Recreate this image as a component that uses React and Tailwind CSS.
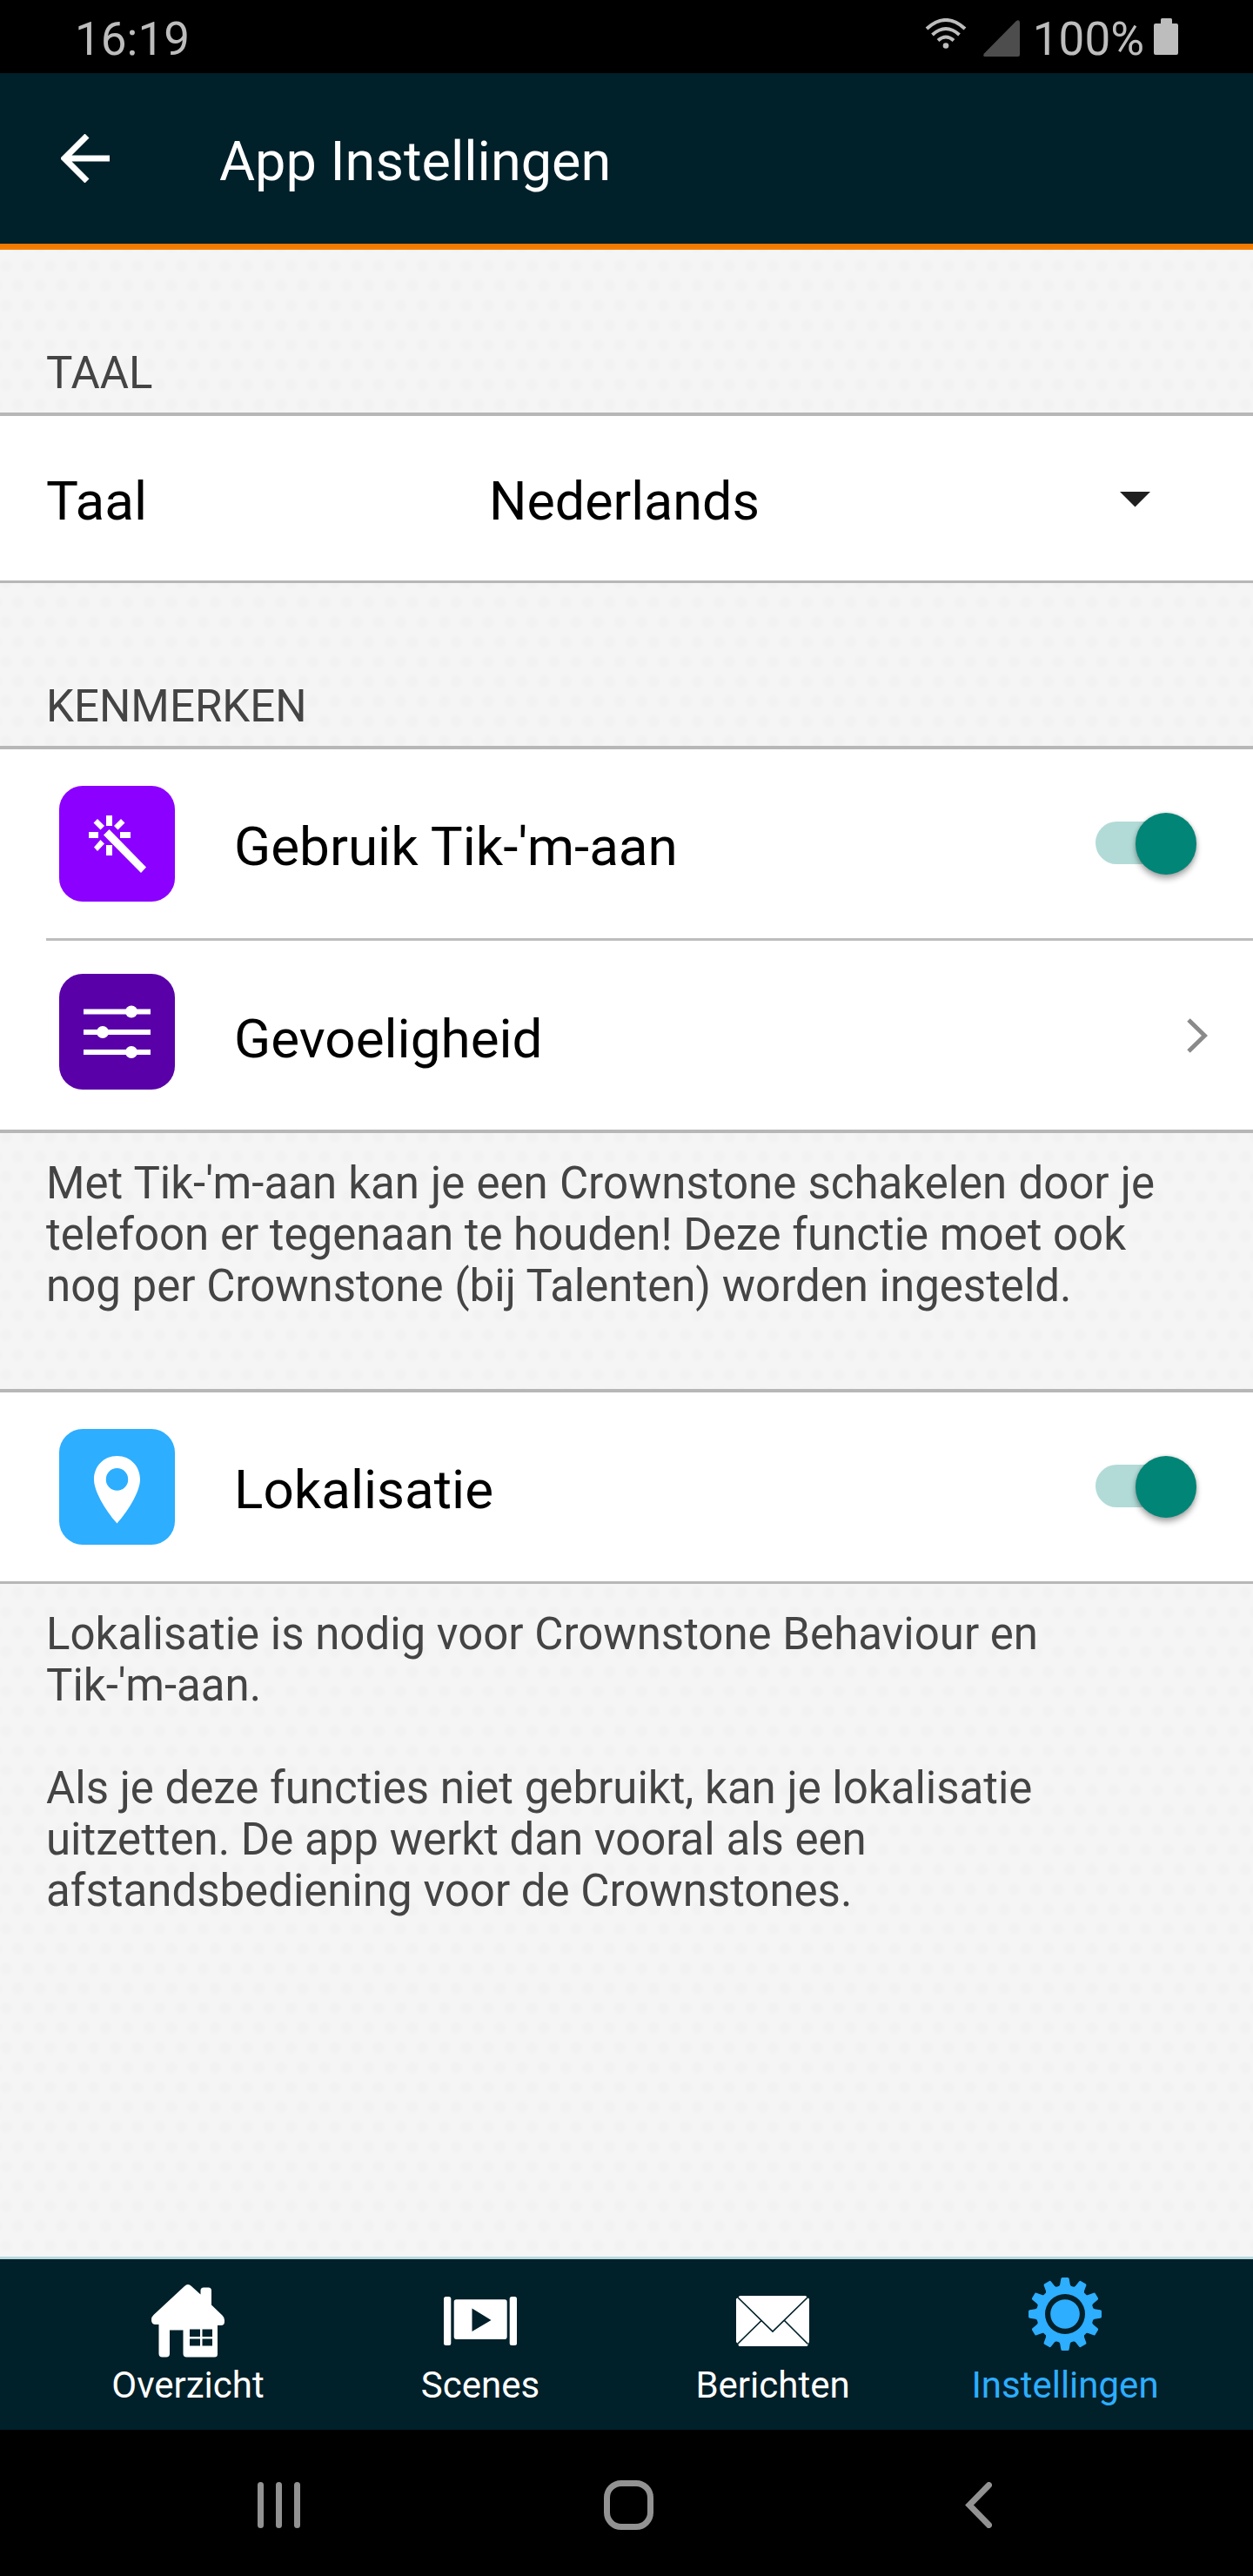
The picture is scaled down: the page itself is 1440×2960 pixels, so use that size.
const Rule = ({ className }) => <div className={`bg-[#b7b7b7] shrink-0 ${className}`} />;

const Tile = ({ className, children }) => (
  <div className={`w-[133px] h-[133px] rounded-[27px] shrink-0 ${className}`}>
    <svg viewBox="0 0 133 133" className="w-full h-full">{children}</svg>
  </div>
);

const Switch = () => (
  <div className="relative ml-auto mr-[65px] w-[116px] h-[71px] -mt-px flex items-center">
    <div className="w-[100px] h-[49px] rounded-full bg-[#b2dbd7] -mt-[2px]" />
    <div className="absolute right-0 top-0 w-[70px] h-[71px] rounded-full bg-[#008577] shadow-[0_5px_7px_rgba(0,0,0,0.32),0_0_4px_rgba(0,0,0,0.16)]" />
  </div>
);

const Row = ({ icon, label, labelClass = "mt-[6px]", children }) => (
  <div className="h-[217px] shrink-0 bg-white flex items-center pl-[68px]">
    {icon}
    <div className={`ml-[68px] text-[62px] leading-[74px] text-black whitespace-nowrap ${labelClass}`}>{label}</div>
    {children}
  </div>
);

const SectionTitle = ({ children }) => (
  <div className="h-[187px] shrink-0 flex items-end px-[53px] pb-[16px] text-[51px] leading-[59px] text-[#444]">{children}</div>
);

const WandIcon = () => (
  <Tile className="bg-[#8b00ff]">
    <g fill="#fff">
      <rect x="54" y="34" width="7" height="12" />
      <rect x="54" y="68" width="7" height="12" />
      <rect x="34" y="53" width="11" height="7" />
      <rect x="70" y="53" width="12" height="7" />
      <path d="M44 38l8 8-4.500 4.500-8-8zM71 38l4.500 4.500-8 8-4.500-4.500zM47.500 62l4.500 4.500-8 8.500-4-4.500z" />
      <path d="M57.500 50L100 93.500 94 100 51 56.500z" />
    </g>
  </Tile>
);

const SlidersIcon = () => (
  <Tile className="bg-[#5900a8]">
    <g fill="#fff">
      <rect x="28" y="40.500" width="77" height="6" />
      <rect x="28" y="64" width="77" height="6" />
      <rect x="28" y="87" width="77" height="6" />
      <circle cx="83" cy="43.500" r="7" />
      <circle cx="50" cy="67" r="7" />
      <circle cx="83" cy="90" r="7" />
    </g>
  </Tile>
);

const PinIcon = () => (
  <Tile className="bg-[#2daeff]">
    <path fill="#fff" fillRule="evenodd" d="M66.500 31C51 31 40 43 40 58c0 13 12 34 26.500 50.500C81 92 93 71 93 58 93 43 82 31 66.500 31zM66.500 45a12.700 12.900 0 1 1 0 25.800 12.700 12.900 0 1 1 0-25.800z" />
  </Tile>
);

const HomeIcon = () => (
  <svg viewBox="0 0 84 84" className="w-[84px] h-[84px]">
    <path fill="#fff" fillRule="evenodd" d="M38 2Q42 -2 46 2L56.500 11.500V7Q56.500 3.500 60 3.500H65.500Q69 3.500 69 7V23.500L81.500 35.500Q84 38 84 41V43Q84 47 80 47H76V80Q76 83.500 72.500 83.500H40.500Q36.500 83.500 36.500 79.500V52.500H21V79.500Q21 83.500 17 83.500H12.500Q8.500 83.500 8.500 79.500V46H5Q0 46 0 41Q0 37 2.500 35zM44 51.500V60H56V51.500zM58.500 51.500V60H70V51.500zM44 62.500V70.500H56V62.500zM58.500 62.500V70.500H70V62.500z" />
  </svg>
);

const ScenesIcon = () => (
  <svg viewBox="0 0 84 56" className="w-[84px] h-[56px]">
    <g fill="#fff">
      <rect width="8.300" height="56" rx="2.500" />
      <rect x="75.700" width="8.300" height="56" rx="2.500" />
      <path fillRule="evenodd" d="M14.500 3.300H70Q72.700 3.300 72.700 6V46Q72.700 49 70 49H14.500Q11.700 49 11.700 46V6Q11.700 3.300 14.500 3.300zM32.500 13.500V40L54.500 27z" />
    </g>
  </svg>
);

const MailIcon = () => (
  <svg viewBox="0 0 84 58" className="w-[84px] h-[58px] -mt-px">
    <path fill="#fff" d="M4.500 0H79.500Q81 0 81 1.500L84 3.500V53L82.500 56Q82.500 58 81 58H4Q2.500 58 2.500 56L0 53V3.500L3 1.500Q3 0 4.500 0z" />
    <path d="M2 2L42 41 82 2M1.500 55.500L28.500 29M82.500 55.500L55.500 28.500" fill="none" stroke="#00202a" strokeWidth="1.700" />
  </svg>
);

const GearIcon = () => (
  <svg viewBox="-42 -42 84 84" className="w-[84px] h-[84px]">
    <g fill="#2daeff">
      {[0, 30, 60, 90, 120, 150, 180, 210, 240, 270, 300, 330].map((a) => (
        <path key={a} transform={`rotate(${a})`} d="M-9 -30Q-6.200 -32 -5.800 -34L-4.700 -40.500Q-4.500 -42 -3 -42H3Q4.500 -42 4.700 -40.500L5.800 -34Q6.200 -32 9 -30z" />
      ))}
      <path fillRule="evenodd" d="M0 -33A33 33 0 1 1 0 33A33 33 0 1 1 0 -33zM0 -23A23 23 0 1 0 0 23A23 23 0 1 0 0 -23z" />
      <circle r="16.800" />
    </g>
  </svg>
);

const Tab = ({ icon, label, className = "", iconClass = "mt-[3px] mb-[7px]" }) => (
  <div className="w-[336px] flex flex-col items-center">
    <div className={`h-[84px] flex items-center ${iconClass}`}>{icon}</div>
    <div className={`text-[42px] leading-[50px] ${className}`}>{label}</div>
  </div>
);

export default function App() {
  return (
    <div className="w-[1440px] h-[2960px] flex flex-col overflow-hidden bg-[#f5f5f5] [background-image:radial-gradient(circle_at_center,rgba(0,0,0,0.012)_4px,transparent_9px),radial-gradient(circle_at_center,rgba(0,0,0,0.012)_4px,transparent_9px)] [background-size:25.2px_45.5px] [background-position:-5.6px_9.7px,8px_32.5px] font-['Roboto',sans-serif]">
      <div className="h-[84px] shrink-0 bg-black text-[#bdbdbd] text-[53px] leading-[62px] flex items-center pl-[86px] pr-[86px]">
        <div className="mt-[5px]">16:19</div>
        <svg viewBox="0 0 48 36" className="ml-auto w-[48px] h-[36px] -mt-[6px]">
          <g fill="none" stroke="#bdbdbd" strokeWidth="4">
            <path d="M2 12Q24 -8 46 12" />
            <path d="M8.500 19Q24 5 39.500 19" />
            <path d="M15 25.500Q24 17.500 33 25.500" />
          </g>
          <circle cx="24" cy="31.500" r="3.300" fill="#bdbdbd" />
        </svg>
        <svg viewBox="0 0 42 42" className="ml-[19px] w-[42px] h-[42px] mt-[4px]">
          <path d="M38 1Q42 -1 42 3V40Q42 42 40 42H2Q-1 42 1 38.500z" fill="#4d4d4d" />
        </svg>
        <div className="ml-[15px] mt-[5px]">100%</div>
        <svg viewBox="0 0 28 42" className="ml-[11px] w-[28px] h-[42px]">
          <path d="M8 1.500Q8 0 9.500 0H19.500Q21 0 21 1.500V6H26Q28 6 28 8V40Q28 42 26 42H2Q0 42 0 40V8Q0 6 2 6H8z" fill="#bdbdbd" />
        </svg>
      </div>

      <div className="h-[196px] shrink-0 bg-[#00202a] flex items-center pl-[70px]">
        <svg viewBox="0 0 56 56" className="w-[56px] h-[56px]">
          <path d="M30 2L4 28 30 54M4 28H56" fill="none" stroke="#fff" strokeWidth="7" />
        </svg>
        <div className="ml-[126px] mt-[7px] text-[63px] leading-[74px] text-white">App Instellingen</div>
      </div>
      <div className="h-[7px] shrink-0 bg-linear-to-b from-[#ea7800] to-[#f88100]" />

      <SectionTitle>TAAL</SectionTitle>
      <Rule className="h-[4px]" />
      <div className="h-[189px] shrink-0 bg-white flex items-center pl-[53px] pr-[118px] text-[62px] leading-[74px] text-black">
        <div className="w-[507px] mt-[6px]">Taal</div>
        <div className="mt-[6px] ml-[2px] text-[61px]">Nederlands</div>
        <svg viewBox="0 0 35 18" className="ml-auto mt-[2px] w-[35px] h-[18px]">
          <path d="M0 0H35L17.500 17.500z" fill="#1f1f1f" />
        </svg>
      </div>
      <Rule className="h-[3px]" />

      <SectionTitle>KENMERKEN</SectionTitle>
      <Rule className="h-[4px]" />
      <Row icon={<WandIcon />} label="Gebruik Tik-'m-aan"><Switch /></Row>
      <div className="bg-white pl-[53px]"><div className="h-[3px] bg-[#bdbdbd]" /></div>
      <Row icon={<div className="-mt-[8px]"><SlidersIcon /></div>} label="Gevoeligheid" labelClass="mt-[8px]">
        <svg viewBox="0 0 24 40" className="ml-auto mr-[52px] w-[24px] h-[40px]">
          <path d="M2 2L20.500 20 2 38" fill="none" stroke="#8a8a8a" strokeWidth="5" />
        </svg>
      </Row>
      <Rule className="h-[4px]" />

      <div className="h-[294px] shrink-0 pt-[28px] pl-[53px] text-[51px] leading-[59px] text-[#444] whitespace-nowrap">
        <span className="[word-spacing:0.5px]">Met Tik-'m-aan kan je een Crownstone schakelen door je</span><br />
        telefoon er tegenaan te houden! Deze functie moet ook<br />
        nog per Crownstone (bij Talenten) worden ingesteld.
      </div>
      <Rule className="h-[4px]" />
      <Row icon={<PinIcon />} label="Lokalisatie"><Switch /></Row>
      <Rule className="h-[3px]" />

      <div className="h-[773px] shrink-0 pt-[28px] pl-[53px] text-[51px] leading-[59px] text-[#444] whitespace-nowrap">
        Lokalisatie is nodig voor Crownstone Behaviour en<br />
        Tik-'m-aan.<br />
        <br />
        Als je deze functies niet gebruikt, kan je lokalisatie<br />
        uitzetten. De app werkt dan vooral als een<br />
        afstandsbediening voor de Crownstones.
      </div>

      <div className="h-[3px] shrink-0 bg-[#b8dadf]" />
      <div className="h-[196px] shrink-0 bg-[#00202a] flex justify-center pt-[26px] text-white">
        <Tab icon={<HomeIcon />} label="Overzicht" />
        <Tab icon={<ScenesIcon />} label="Scenes" />
        <Tab icon={<MailIcon />} label="Berichten" />
        <Tab icon={<GearIcon />} label="Instellingen" iconClass="-mt-[5px] mb-[15px]" className="text-[#2daeff]" />
      </div>

      <div className="h-[168px] shrink-0 bg-black flex items-center pt-[5px] pl-[296px]">
        <div className="flex gap-[14px] w-[398px]">
          <div className="w-[7px] h-[53px] rounded-full bg-[#929292]" />
          <div className="w-[7px] h-[53px] rounded-full bg-[#929292]" />
          <div className="w-[7px] h-[53px] rounded-full bg-[#929292]" />
        </div>
        <div className="w-[57px] h-[57px] rounded-[20px] border-[7px] border-[#929292]" />
        <svg viewBox="0 0 31 53" className="ml-[358px] w-[31px] h-[53px]">
          <path d="M27.500 3.500L5 26.500 27.500 49.500" fill="none" stroke="#929292" strokeWidth="7" strokeLinecap="round" />
        </svg>
      </div>
    </div>
  );
}
